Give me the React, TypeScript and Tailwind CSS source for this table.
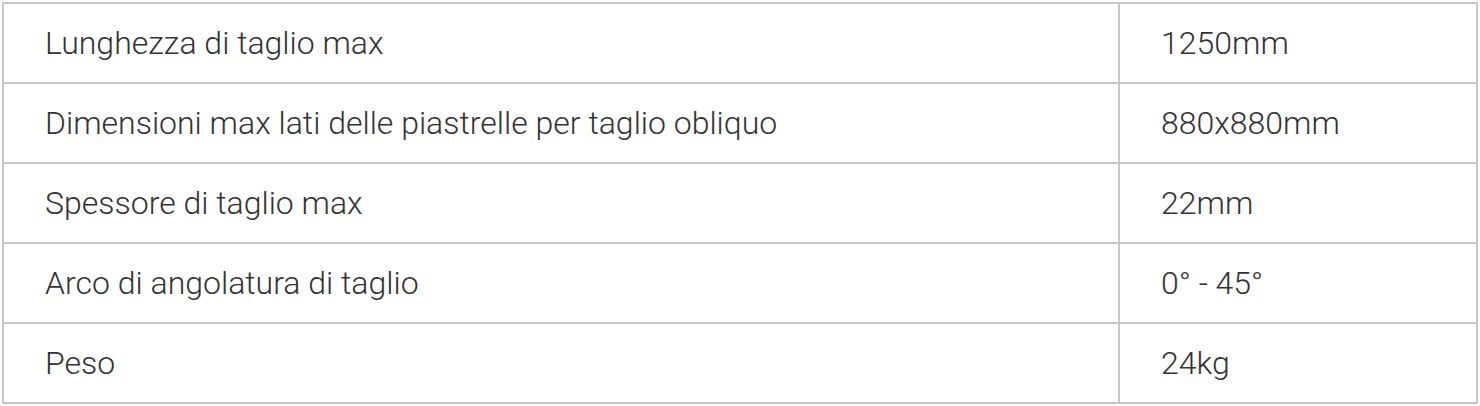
const rows: [string, string][] = [
  ["Lunghezza di taglio max", "1250mm"],
  ["Dimensioni max lati delle piastrelle per taglio obliquo", "880x880mm"],
  ["Spessore di taglio max", "22mm"],
  ["Arco di angolatura di taglio", "0° - 45°"],
  ["Peso", "24kg"],
];

export default function App() {
  return (
    <div className="bg-white p-[2px] w-[1480px] h-[406px]" style={{ fontFamily: "Roboto, sans-serif" }}>
      <table className="w-full border-collapse border-2 border-[#c8c8c8] text-[#333333] text-[32px] font-light">
        <tbody>
          {rows.map(([label, value]) => (
            <tr key={label} className="h-[80px]">
              <td className="border-2 border-[#c8c8c8] pl-[41px] w-[1116px] align-middle">{label}</td>
              <td className="border-2 border-[#c8c8c8] pl-[41px] align-middle">{value}</td>
            </tr>
          ))}
        </tbody>
      </table>
    </div>
  );
}
